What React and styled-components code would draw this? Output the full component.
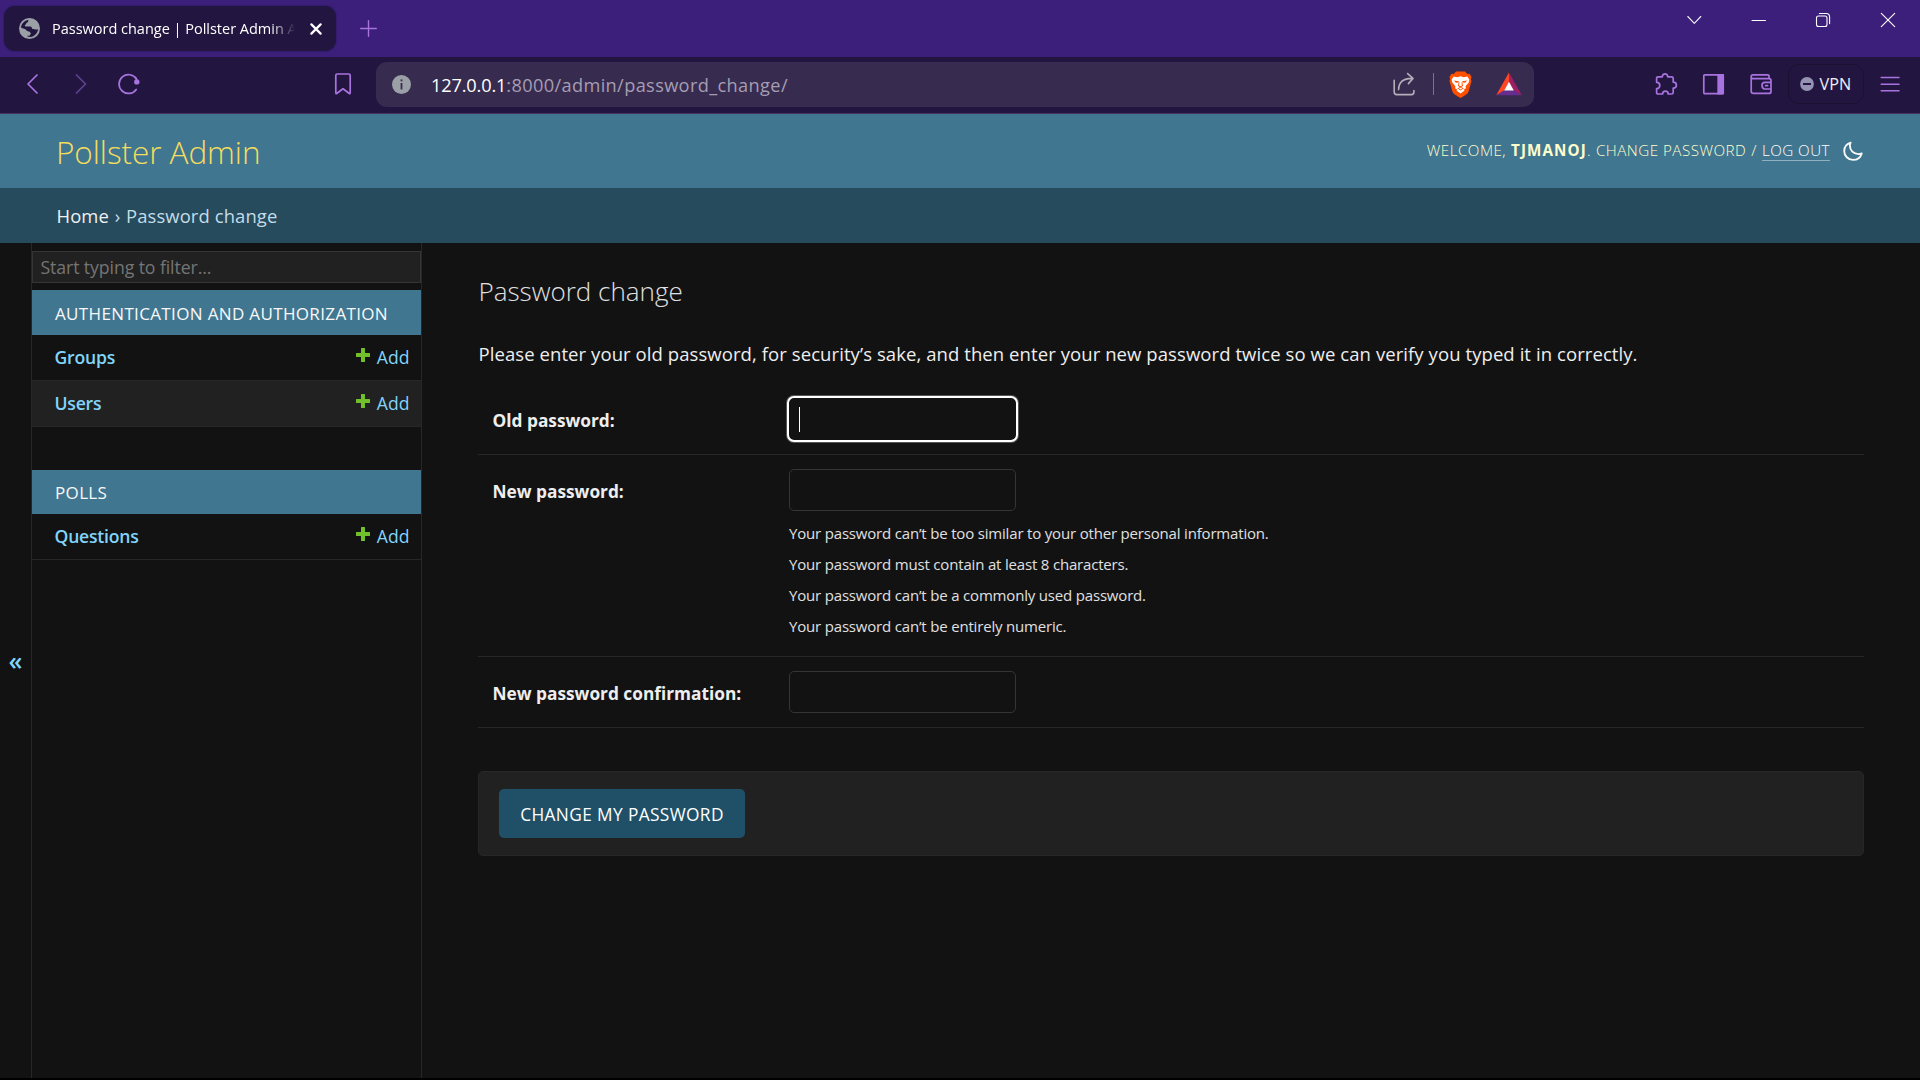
import React from "react";
import styled, { createGlobalStyle, css } from "styled-components";

const GlobalStyle = createGlobalStyle`
  *, *::before, *::after { box-sizing: border-box; }
  body {
    margin: 0;
    background: #121212;
    color: #eeeeee;
    font-family: "Open Sans", "Noto Sans", sans-serif;
    overflow: hidden;
  }
`;

const Window = styled.div`
  display: flex;
  flex-direction: column;
  width: 1920px;
  height: 1080px;
  overflow: hidden;
  white-space: nowrap;
  background: #121212;
  border-bottom: 2px solid #000;
`;

/* ---------- Browser chrome ---------- */

const TabStrip = styled.div`
  display: flex;
  flex: none;
  height: 57px;
  background: #3c1f7b;
`;

const Tab = styled.div`
  display: flex;
  align-items: center;
  width: 332px;
  height: 45px;
  margin: 6px 0 0 4px;
  padding: 0 13px 0 15px;
  border-radius: 11px;
  background: #221640;
  box-shadow: 0 0 2px rgba(20, 10, 50, 0.6);
`;

const TabTitle = styled.span`
  flex: none;
  width: 243px;
  margin: 0 15px 0 12px;
  overflow: hidden;
  font-size: 14.5px;
  letter-spacing: -0.01px;
  line-height: 24px;
  color: #fff;
  mask-image: linear-gradient(to right, #000 218px, transparent 243px);
`;

const NewTab = styled.div`
  display: flex;
  align-items: center;
  margin-left: 24px;
`;

const WindowControls = styled.div`
  display: flex;
  margin: 0 0 0 auto;
`;

const WindowButton = styled.div`
  display: flex;
  align-items: center;
  justify-content: center;
  width: 64.5px;
  height: 40px;
`;

const Toolbar = styled.div`
  display: flex;
  flex: none;
  align-items: center;
  height: 57px;
  padding: 0 18px 2px 21px;
  background: #221640;
  border-bottom: 1px solid #453463;
`;

const NavGroup = styled.div`
  display: flex;
  gap: 24px;
  width: 310px;
`;

const AddressBar = styled.div`
  display: flex;
  align-items: center;
  width: 1158px;
  height: 45px;
  margin-left: 21px;
  padding: 0 12px 0 16px;
  border-radius: 11px;
  background: #382b50;
`;

const Url = styled.div`
  margin: 0 auto 0 20px;
  padding-top: 2px;
  font-size: 18.2px;
  line-height: 28px;
  letter-spacing: 0.36px;
  color: #a59eb2;
`;

const Host = styled.span`
  letter-spacing: -0.16px;
  color: #fff;
`;

const BarDivider = styled.div`
  width: 1px;
  height: 22px;
  margin: 0 15px 0 18px;
  background: #7c7389;
`;

const BatSlot = styled.div`
  display: flex;
  margin-left: 24px;
`;

const Extensions = styled.div`
  display: flex;
  gap: 23.5px;
  margin-left: auto;
`;

const VpnButton = styled.div`
  display: flex;
  align-items: center;
  gap: 6px;
  width: 76px;
  height: 40px;
  margin: 0 14px 0 15px;
  padding-left: 10.5px;
  border: 1px solid #1a1130;
  border-radius: 11px;
  font-size: 16.2px;
  color: #f1eef6;
`;

/* ---------- Admin header ---------- */

const Header = styled.header`
  display: flex;
  flex: none;
  align-items: center;
  justify-content: space-between;
  height: 74px;
  padding: 0 57px 0 56px;
  background: #417690;
`;

const Brand = styled.h1`
  margin: 0;
  padding-top: 2px;
  font-size: 31.5px;
  font-weight: 300;
  letter-spacing: -0.06px;
  line-height: 44px;
  color: #f5dd5d;
`;

const UserTools = styled.div`
  display: flex;
  align-items: center;
  padding-bottom: 2px;
  font-size: 15.2px;
  font-weight: 350;
  line-height: 22px;
  letter-spacing: 0.47px;
  color: #ffffcc;

  svg { margin-top: 2px; }
`;

const Username = styled.strong`
  margin-left: 5px;
  font-weight: 700;
  letter-spacing: 1.1px;
`;

const ToolText = styled.span`
  margin-left: ${(p) => p.$gap || 0}px;
`;

const Logout = styled.a`
  margin: 0 13px 0 5px;
  line-height: 20px;
  border-bottom: 1px solid #8fb0bf;
  color: #fff;
`;

const Breadcrumbs = styled.nav`
  display: flex;
  flex: none;
  align-items: center;
  height: 55px;
  padding: 0 56.5px;
  background: #264b5d;
  font-size: 18.4px;
  letter-spacing: 0.12px;
  color: #c4dce8;
`;

const Crumb = styled.span`
  color: ${(p) => (p.$link ? "#f0f0f0" : "#c4dce8")};
`;

const CrumbSeparator = styled.span`
  width: 17px;
  text-align: center;
`;

/* ---------- Page body ---------- */

const Page = styled.div`
  display: flex;
  flex: 1;
  min-height: 0;
`;

const SidebarToggle = styled.div`
  display: flex;
  align-items: center;
  justify-content: center;
  width: 32px;
  padding-bottom: 2px;
  border-right: 1px solid #272727;
  font-size: 25px;
  font-weight: 600;
  color: #81d4fa;
`;

const Sidebar = styled.aside`
  width: 390px;
  padding-top: 8px;
  border-right: 1px solid #272727;
`;

const FilterBox = styled.div`
  height: 32px;
  margin-bottom: 7px;
  padding-left: 7.5px;
  border: 1px solid #353535;
  background: #212121;
  font-size: 17.7px;
  letter-spacing: -0.1px;
  line-height: 31px;
  color: #757575;
`;

const Module = styled.section`
  margin-bottom: 43px;
`;

const ModuleTitle = styled.h2`
  height: ${(p) => p.$height}px;
  margin: 0;
  padding: ${(p) => p.$height - 44}px 0 0 23px;
  background: #417690;
  font-size: 17px;
  font-weight: 400;
  letter-spacing: 0.35px;
  line-height: 45px;
  color: #f8f8f8;
`;

const ModelRow = styled.div`
  display: flex;
  align-items: center;
  height: 46px;
  padding: 0 11.5px 2px 22.5px;
  border-bottom: 1px solid #272727;
  background: ${(p) => (p.$shaded ? "#212121" : "transparent")};
  font-size: 17.6px;
  color: #81d4fa;
`;

const ModelName = styled.a`
  margin-right: auto;
  font-weight: 600;
  letter-spacing: -0.22px;
`;

const AddLink = styled.a`
  display: flex;
  align-items: center;
  gap: 6.5px;

  svg { margin-bottom: 3px; }
`;

const Content = styled.main`
  flex: 1;
  padding: 29px 56px 0;
`;

const Title = styled.h1`
  margin: 0;
  padding-left: 0.5px;
  font-size: 26px;
  font-weight: 300;
  line-height: 38px;
  color: #e0e0e0;
`;

const Intro = styled.p`
  margin: 30px 0 16px;
  padding-left: 0.5px;
  font-size: 18.5px;
  letter-spacing: 0.078px;
  line-height: 28px;
`;

const FormRow = styled.div`
  display: flex;
  padding: 14px;
  border-bottom: 1px solid #272727;
`;

const Label = styled.label`
  width: 297px;
  padding: 3px 0 0 0.5px;
  font-size: 17.3px;
  font-weight: 700;
  line-height: 39px;
`;

const Field = styled.div`
  display: flex;
  flex-direction: column;
`;

const PasswordInput = styled.div`
  display: flex;
  align-items: center;
  width: 227px;
  height: 42px;
  padding-left: 9px;
  border: 1px solid #353535;
  border-radius: 5px;
  background: #121212;

  ${(p) =>
    p.$focused &&
    css`
      border-color: #121212;
      outline: 2px solid #fff;
      box-shadow: 0 0 0 3px #555;
    `}
`;

const Caret = styled.span`
  width: 1px;
  height: 25px;
  background: #fff;
`;

const HelpList = styled.ul`
  margin: 7px 0 0;
  padding: 0;
  list-style: none;
  font-size: 15px;
  letter-spacing: -0.18px;
  line-height: 31px;
  color: #e0e0e0;
`;

const SubmitRow = styled.div`
  display: flex;
  align-items: center;
  height: 85px;
  margin-top: 43px;
  padding-left: 20px;
  border: 1px solid #272727;
  border-radius: 5px;
  background: #212121;
`;

const SubmitButton = styled.button`
  width: 246px;
  height: 49px;
  padding: 2px 0 0;
  border: 0;
  border-radius: 5px;
  background: #205067;
  font-family: inherit;
  font-size: 17.3px;
  letter-spacing: 0.38px;
  color: #fff;
`;

/* ---------- Icons ---------- */

const Stroke = styled.svg`
  flex: none;
  display: block;
  fill: none;
  stroke: ${(p) => p.$color || "#a873de"};
  stroke-width: ${(p) => p.$weight || 1.7};
  stroke-linecap: round;
  stroke-linejoin: round;
`;

const Fill = styled.svg`
  flex: none;
  display: block;
`;

const Globe = () => (
  <Fill width="21" height="21" viewBox="0 0 21 21">
    <circle cx="10.5" cy="10.5" r="10.5" fill="#9aa0a6" />
    <path fill="#221640" d="M2 9.4C2.5 5.6 5.6 2.5 9.3 2.1C9.6 3.6 8.8 4.4 7.8 4.7C7.1 5 7.4 6.1 6.6 6.5C5.5 7 5.6 8.4 7 8.4H11.4C12.5 8.4 12.8 9.2 12.8 10.2C12.8 11.2 14.9 10.8 15.6 11.2C16.6 11.8 18 11.7 19 10.9C18.8 15 15.6 18.4 11.4 19L8.6 18.8C8.4 17.2 9.1 16.8 10.4 16.7C12 16.5 11.8 14.6 10.7 13.8C9.5 13 8.2 13.4 7.4 12.2C6.4 10.6 3.8 10.7 2 9.4Z" />
    <path fill="#9aa0a6" d="M7.8 15.4L9.4 14.2L11.8 15.6L10 18.6Z" />
  </Fill>
);

const TabClose = () => (
  <Stroke width="12" height="12" viewBox="0 0 12 12" $color="#fff" $weight={2.2}>
    <path d="M1.4 1.4L10.6 10.6M10.6 1.4L1.4 10.6" />
  </Stroke>
);

const Plus = () => (
  <Stroke width="17" height="17" viewBox="0 0 17 17" $weight={1.4}>
    <path d="M8.5 .7V16.3M.7 8.5H16.3" />
  </Stroke>
);

const Back = () => (
  <Stroke width="24" height="24" viewBox="0 0 24 24">
    <path d="M16 3L7 12L16 21" />
  </Stroke>
);

const Forward = () => (
  <Stroke width="24" height="24" viewBox="0 0 24 24" $color="#60408d">
    <path d="M7.5 3L16.5 12L7.5 21" />
  </Stroke>
);

const Reload = () => (
  <Stroke width="24" height="24" viewBox="0 0 24 24">
    <path d="M19.2 17.4A9.4 9.4 0 1 1 19.4 7" />
    <circle cx="19.8" cy="9.9" r="2.7" fill="#a873de" stroke="none" />
    <path d="M18.6 5.5L20.3 9" />
  </Stroke>
);

const Bookmark = () => (
  <Stroke width="24" height="24" viewBox="0 0 24 24">
    <path d="M4.8 3.4Q4.8 2 6.2 2H17.8Q19.2 2 19.2 3.4V20.8Q19.2 22.2 18 21.3L12 16.8L6 21.3Q4.8 22.2 4.8 20.8Z" />
  </Stroke>
);

const Info = () => (
  <Fill width="19" height="19" viewBox="0 0 19 19">
    <circle cx="9.5" cy="9.5" r="9.5" fill="#9aa0a6" />
    <rect x="8.6" y="4.4" width="1.8" height="1.9" fill="#382b50" />
    <rect x="8.6" y="8" width="1.8" height="6.4" fill="#382b50" />
  </Fill>
);

const Share = () => (
  <Stroke width="22" height="24" viewBox="0 0 22 24" $color="#b3afb9" $weight={1.6}>
    <path d="M1.2 8.2V20Q1.2 22.6 3.8 22.6H18.4Q20.9 22.6 20.9 20V18.6M5.6 17.6C5.8 10.6 9.6 6.4 18.8 6.4M14.6 1.6L20 6.4L15.4 11.6" />
  </Stroke>
);

const Brave = () => (
  <Fill width="23" height="27" viewBox="0 0 23 27">
    <path fill="#ff5000" d="M7 .5H16L18.3 3L20.6 2.8L22.6 6L21.9 8L22.5 10L19.6 20.6Q19 22.3 17.6 23.3L12.6 26.5Q11.5 27.1 10.4 26.5L5.4 23.3Q4 22.3 3.4 20.6L.5 10L1.1 8L.4 6L2.4 2.8L4.7 3Z" />
    <path fill="#fff" d="M4.6 5.6L8.2 6.2L11.5 5.2L14.8 6.2L18.4 5.6L20.3 8.6L19.9 11.3L16.6 15.3L16.9 17.2L14.6 18.7L15.6 19.6L11.5 22.6L7.4 19.6L8.4 18.7L6.1 17.2L6.4 15.3L3.1 11.3L2.7 8.6Z" />
    <path fill="#ff5000" d="M4.8 9.6L9.8 10.2L9.4 11.4L7 11.7ZM18.2 9.6L13.2 10.2L13.6 11.4L16 11.7ZM9.6 11.4H10.6L10 14.4L11.5 15.2L13 14.4L12.4 11.4H13.4L14 14.9L11.5 16.4L9 14.9ZM8.2 17.3L11.5 16.1L14.8 17.3L11.5 19.4Z" />
    <path fill="#fff" d="M9.6 17.4L11.5 16.8L13.4 17.4L11.5 18.4Z" />
  </Fill>
);

const Bat = () => (
  <Fill width="26" height="24" viewBox="0 0 26 24">
    <path fill="#ff4724" d="M13 .5V10L8.4 18.4L.2 23.2Z" />
    <path fill="#9e1f63" d="M13 .5L25.8 23.2L17.6 18.4L13 10Z" />
    <path fill="#662d91" d="M.2 23.2L8.4 18.4H17.6L25.8 23.2Z" />
    <path fill="#fff" d="M13 9.8L17.8 18.6H8.2Z" />
  </Fill>
);

const Puzzle = () => (
  <Stroke width="24" height="24" viewBox="0 0 24 24">
    <path d="M2.6 6.4Q2.6 4.8 4.2 4.8H8.2C8.4 3 9.4 1.8 11 1.8S13.6 3 13.8 4.8H17.6Q19.2 4.8 19.2 6.4V10.2C21.2 10.3 22.4 11.6 22.4 13.2S21.2 16 19.2 16.1V20.4Q19.2 22 17.6 22H14.2C14.2 20.2 12.8 19.2 11.4 19.2S8.6 20.2 8.6 22H4.2Q2.6 22 2.6 20.4V16.6C4.6 16.4 5.8 15 5.8 13.4S4.6 10.4 2.6 10.3Z" />
  </Stroke>
);

const SidePanel = () => (
  <Stroke width="24" height="24" viewBox="0 0 24 24">
    <rect x="1.8" y="2.8" width="19.4" height="18.8" rx="1" />
    <path d="M16.2 2.8H21.2V21.6H16.2Z" fill="#a873de" />
  </Stroke>
);

const Wallet = () => (
  <Stroke width="24" height="24" viewBox="0 0 24 24">
    <path d="M20 6.6V4.2Q20 2.8 18.6 2.8H4Q2.2 2.8 2.2 4.6V19.2Q2.2 21.4 4.4 21.4H20Q22 21.4 22 19.4V8.6Q22 6.6 20 6.6H3.8Q2.2 6.6 2.2 4.8M22 10.4H15.8Q13 10.4 13 13.6T15.8 17H22M16.6 13.7H18.6" />
  </Stroke>
);

const VpnStatus = () => (
  <Fill width="14" height="14" viewBox="0 0 14 14">
    <circle cx="7" cy="7" r="6.9" fill="#9592b3" />
    <rect x="3" y="6" width="8" height="2" fill="#221640" />
  </Fill>
);

const Menu = () => (
  <Stroke width="24" height="24" viewBox="0 0 24 24" $weight={1.5}>
    <path d="M3.2 5.6H21M3.2 12.2H21M3.2 18.8H21" />
  </Stroke>
);

const ChevronDown = () => (
  <Stroke width="16" height="16" viewBox="0 0 16 16" $color="#f4f1f8" $weight={1.1}>
    <path d="M1.8 4.5L8.3 11.3L14.8 4.5" />
  </Stroke>
);

const Minimize = () => (
  <Stroke width="16" height="16" viewBox="0 0 16 16" $color="#fff" $weight={1}>
    <path d="M1 8.5H14.5" />
  </Stroke>
);

const Restore = () => (
  <Stroke width="16" height="16" viewBox="0 0 16 16" $color="#fff" $weight={1.1}>
    <rect x="1.5" y="4" width="10.5" height="10.5" rx="2" />
    <path d="M4.4 1.5H11.2Q14.6 1.5 14.6 5V11.6" />
  </Stroke>
);

const WindowClose = () => (
  <Stroke width="16" height="16" viewBox="0 0 16 16" $color="#fff" $weight={1.1}>
    <path d="M1.3 1.3L14.7 14.7M14.7 1.3L1.3 14.7" />
  </Stroke>
);

const Moon = () => (
  <Stroke width="20" height="20" viewBox="0 0 20 20" $color="#f8f8f8" $weight={1.9}>
    <path d="M7.6 1.6C4 2.8 1.2 6 1.2 10C1.2 14.9 5.1 18.9 10 18.9C14.2 18.9 17.6 16.2 18.7 12.4C17.7 12.9 16.5 13.1 15.3 13.1C10.6 13.1 6.9 9.4 6.9 4.8C6.9 3.6 7.1 2.5 7.6 1.6Z" />
  </Stroke>
);

const AddIcon = () => (
  <Fill width="14" height="14" viewBox="0 0 14 14">
    <path fill="#70bf2b" d="M5 .5Q5 0 5.5 0H8.5Q9 0 9 .5V5H13.5Q14 5 14 5.5V8.5Q14 9 13.5 9H9V13.5Q9 14 8.5 14H5.5Q5 14 5 13.5V9H.5Q0 9 0 8.5V5.5Q0 5 .5 5H5Z" />
  </Fill>
);

/* ---------- Data ---------- */

const modules = [
  { title: "AUTHENTICATION AND AUTHORIZATION", height: 45, models: ["Groups", "Users"] },
  { title: "POLLS", height: 44, models: ["Questions"] },
];

const passwordRules = [
  "Your password can’t be too similar to your other personal information.",
  "Your password must contain at least 8 characters.",
  "Your password can’t be a commonly used password.",
  "Your password can’t be entirely numeric.",
];

const fields = [
  { label: "Old password:", focused: true },
  { label: "New password:", help: passwordRules },
  { label: "New password confirmation:" },
];

export default function App() {
  return (
    <Window>
      <GlobalStyle />
      <TabStrip>
        <Tab>
          <Globe />
          <TabTitle>Password change | Pollster Admin A</TabTitle>
          <TabClose />
        </Tab>
        <NewTab><Plus /></NewTab>
        <WindowControls>
          <WindowButton><ChevronDown /></WindowButton>
          <WindowButton><Minimize /></WindowButton>
          <WindowButton><Restore /></WindowButton>
          <WindowButton><WindowClose /></WindowButton>
        </WindowControls>
      </TabStrip>

      <Toolbar>
        <NavGroup>
          <Back />
          <Forward />
          <Reload />
        </NavGroup>
        <Bookmark />
        <AddressBar>
          <Info />
          <Url><Host>127.0.0.1</Host>:8000/admin/password_change/</Url>
          <Share />
          <BarDivider />
          <Brave />
          <BatSlot><Bat /></BatSlot>
        </AddressBar>
        <Extensions>
          <Puzzle />
          <SidePanel />
          <Wallet />
        </Extensions>
        <VpnButton><VpnStatus />VPN</VpnButton>
        <Menu />
      </Toolbar>

      <Header>
        <Brand>Pollster Admin</Brand>
        <UserTools>
          <ToolText>WELCOME,</ToolText>
          <Username>TJMANOJ</Username>
          <ToolText>.</ToolText>
          <ToolText $gap={5}>CHANGE PASSWORD</ToolText>
          <ToolText $gap={5}>/</ToolText>
          <Logout>LOG OUT</Logout>
          <Moon />
        </UserTools>
      </Header>

      <Breadcrumbs>
        <Crumb $link>Home</Crumb>
        <CrumbSeparator>›</CrumbSeparator>
        <Crumb>Password change</Crumb>
      </Breadcrumbs>

      <Page>
        <SidebarToggle>«</SidebarToggle>
        <Sidebar>
          <FilterBox>Start typing to filter...</FilterBox>
          {modules.map((module) => (
            <Module key={module.title}>
              <ModuleTitle $height={module.height}>{module.title}</ModuleTitle>
              {module.models.map((model, i) => (
                <ModelRow key={model} $shaded={i % 2 === 1}>
                  <ModelName>{model}</ModelName>
                  <AddLink><AddIcon />Add</AddLink>
                </ModelRow>
              ))}
            </Module>
          ))}
        </Sidebar>

        <Content>
          <Title>Password change</Title>
          <Intro>
            Please enter your old password, for security’s sake, and then enter your new password twice so we can verify you typed it in correctly.
          </Intro>
          {fields.map(({ label, focused, help }) => (
            <FormRow key={label}>
              <Label>{label}</Label>
              <Field>
                <PasswordInput $focused={focused}>{focused && <Caret />}</PasswordInput>
                {help && (
                  <HelpList>
                    {help.map((rule) => <li key={rule}>{rule}</li>)}
                  </HelpList>
                )}
              </Field>
            </FormRow>
          ))}
          <SubmitRow>
            <SubmitButton>CHANGE MY PASSWORD</SubmitButton>
          </SubmitRow>
        </Content>
      </Page>
    </Window>
  );
}
